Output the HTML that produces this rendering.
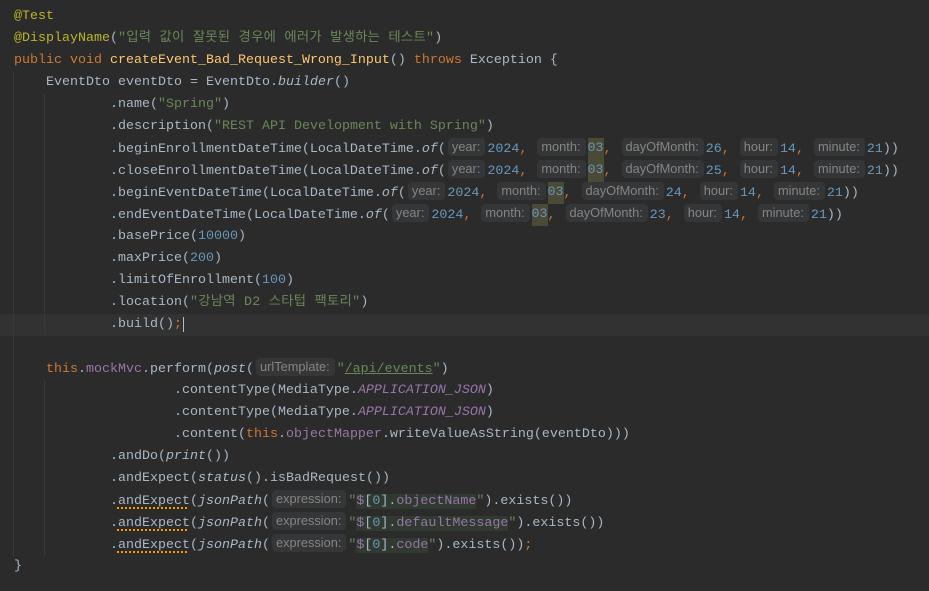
<!DOCTYPE html>
<html><head><meta charset="utf-8"><style>
body{margin:0;width:929px;height:591px;background:#2b2b2b;overflow:hidden;position:relative;font-family:"Liberation Mono","Noto Sans CJK KR",monospace;font-size:13.33px;color:#a9b7c6}
.l{position:absolute;left:14px;height:22px;line-height:22px;white-space:pre}
.k{color:#cc7832}.a{color:#bbb529}.s{color:#6a8759}.n{color:#6897bb}.m{color:#ffc66d}.f{color:#9876aa}.i{font-style:italic}.fi{color:#9876aa;font-style:italic}
.h{display:inline-block;font-family:"Liberation Sans",sans-serif;font-size:12.8px;color:#858585;background:#353637;border-radius:4px;padding:0 5px 0 4px;height:18px;line-height:18px;vertical-align:1px;margin-right:2px;margin-left:2px}
.hl{background:#4b4a36;display:inline-block;height:22px;vertical-align:top}
.g{background:#303a30}
.w{text-decoration:underline dotted #ff9800;text-decoration-thickness:2px;text-underline-offset:3px}
.u{text-decoration:underline}
.ko{letter-spacing:0.25px}
.ig{position:absolute;width:1px;background:#393939}
</style></head><body>
<div style="position:absolute;left:0;top:314px;width:929px;height:22px;background:#323232"></div>
<div class="ig" style="left:13px;top:72px;height:484px"></div>
<div class="ig" style="left:44px;top:94px;height:240px"></div>
<div class="ig" style="left:44px;top:380px;height:176px"></div>
<div class="l" style="top:6px"><span class="a">@Test</span></div>
<div class="l" style="top:28px"><span class="a">@DisplayName</span>(<span class="s ko">"입력 값이 잘못된 경우에 에러가 발생하는 테스트"</span>)</div>
<div class="l" style="top:50px"><span class="k">public void </span><span class="m">createEvent_Bad_Request_Wrong_Input</span>() <span class="k">throws </span>Exception {</div>
<div class="l" style="top:72px">    EventDto eventDto = EventDto.<span class="i">builder</span>()</div>
<div class="l" style="top:94px">            .name(<span class="s">"Spring"</span>)</div>
<div class="l" style="top:116px">            .description(<span class="s">"REST API Development with Spring"</span>)</div>
<div class="l" style="top:138px">            .beginEnrollmentDateTime(LocalDateTime.<span class="i">of</span>(<span class="h">year:</span><span class="n">2024</span><span class="k">, </span><span class="h">month:</span><span class="n hl">03</span><span class="k">, </span><span class="h">dayOfMonth:</span><span class="n">26</span><span class="k">, </span><span class="h">hour:</span><span class="n">14</span><span class="k">, </span><span class="h">minute:</span><span class="n">21</span>))</div>
<div class="l" style="top:160px">            .closeEnrollmentDateTime(LocalDateTime.<span class="i">of</span>(<span class="h">year:</span><span class="n">2024</span><span class="k">, </span><span class="h">month:</span><span class="n hl">03</span><span class="k">, </span><span class="h">dayOfMonth:</span><span class="n">25</span><span class="k">, </span><span class="h">hour:</span><span class="n">14</span><span class="k">, </span><span class="h">minute:</span><span class="n">21</span>))</div>
<div class="l" style="top:182px">            .beginEventDateTime(LocalDateTime.<span class="i">of</span>(<span class="h">year:</span><span class="n">2024</span><span class="k">, </span><span class="h">month:</span><span class="n hl">03</span><span class="k">, </span><span class="h">dayOfMonth:</span><span class="n">24</span><span class="k">, </span><span class="h">hour:</span><span class="n">14</span><span class="k">, </span><span class="h">minute:</span><span class="n">21</span>))</div>
<div class="l" style="top:204px">            .endEventDateTime(LocalDateTime.<span class="i">of</span>(<span class="h">year:</span><span class="n">2024</span><span class="k">, </span><span class="h">month:</span><span class="n hl">03</span><span class="k">, </span><span class="h">dayOfMonth:</span><span class="n">23</span><span class="k">, </span><span class="h">hour:</span><span class="n">14</span><span class="k">, </span><span class="h">minute:</span><span class="n">21</span>))</div>
<div class="l" style="top:226px">            .basePrice(<span class="n">10000</span>)</div>
<div class="l" style="top:248px">            .maxPrice(<span class="n">200</span>)</div>
<div class="l" style="top:270px">            .limitOfEnrollment(<span class="n">100</span>)</div>
<div class="l" style="top:292px">            .location(<span class="s ko">"강남역 D2 스타텁 팩토리"</span>)</div>
<div class="l" style="top:314px">            .build()<span class="k">;</span><span style="border-left:1.5px solid #bbb;margin-left:1px"></span></div>
<div class="l" style="top:358px">    <span class="k">this</span>.<span class="f">mockMvc</span>.perform(<span class="i">post</span>(<span class="h">urlTemplate:</span><span class="s">"<span class="u">/api/events</span>"</span>)</div>
<div class="l" style="top:380px">                    .contentType(MediaType.<span class="fi">APPLICATION_JSON</span>)</div>
<div class="l" style="top:402px">                    .contentType(MediaType.<span class="fi">APPLICATION_JSON</span>)</div>
<div class="l" style="top:424px">                    .content(<span class="k">this</span>.<span class="f">objectMapper</span>.writeValueAsString(eventDto)))</div>
<div class="l" style="top:446px">            .andDo(<span class="i">print</span>())</div>
<div class="l" style="top:468px">            .andExpect(<span class="i">status</span>().isBadRequest())</div>
<div class="l" style="top:490px">            .<span class="w">andExpect</span>(<span class="i">jsonPath</span>(<span class="h">expression:</span><span class="s">"</span><span class="g"><span class="f">$</span>[<span class="n">0</span>].<span class="f">objectName</span></span><span class="s">"</span>).exists())</div>
<div class="l" style="top:512px">            .<span class="w">andExpect</span>(<span class="i">jsonPath</span>(<span class="h">expression:</span><span class="s">"</span><span class="g"><span class="f">$</span>[<span class="n">0</span>].<span class="f">defaultMessage</span></span><span class="s">"</span>).exists())</div>
<div class="l" style="top:534px">            .<span class="w">andExpect</span>(<span class="i">jsonPath</span>(<span class="h">expression:</span><span class="s">"</span><span class="g"><span class="f">$</span>[<span class="n">0</span>].<span class="f">code</span></span><span class="s">"</span>).exists())<span class="k">;</span></div>
<div class="l" style="top:556px">}</div>
</body></html>
